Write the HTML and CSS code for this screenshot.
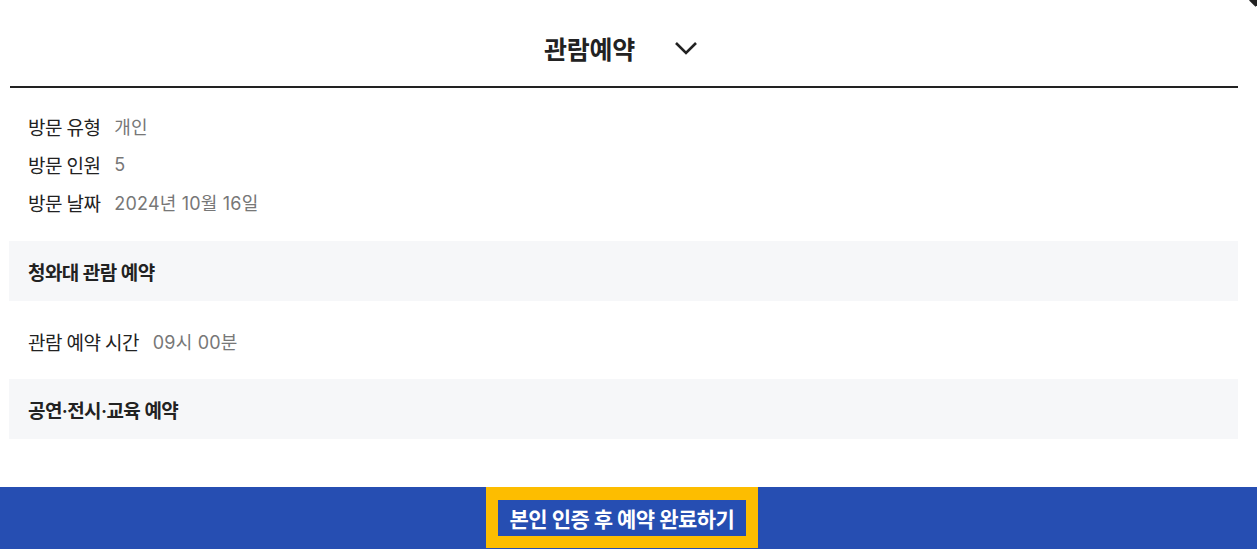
FILE: index.html
```html
<!DOCTYPE html>
<html lang="ko">
<head>
    <meta charset="UTF-8">
    <title>관람예약</title>
    <link rel="stylesheet" href="styles.css">
</head>
<body>
    <span class="corner"></span>
    <div class="panel">
        <div class="panel-head">
            <h1>관람예약</h1>
            <svg class="chevron" width="24" height="14" viewBox="0 0 24 14">
                <path d="M2 2 L12 12 L22 2" fill="none" stroke="#222" stroke-width="2.6"/>
            </svg>
        </div>

        <div class="info">
            <div class="row"><span class="label">방문 유형</span><span class="value">개인</span></div>
            <div class="row"><span class="label">방문 인원</span><span class="value">5</span></div>
            <div class="row"><span class="label">방문 날짜</span><span class="value">2024년 10월 16일</span></div>
        </div>

        <div class="section-title">청와대 관람 예약</div>

        <div class="info info-time">
            <div class="row"><span class="label">관람 예약 시간</span><span class="value">09시 00분</span></div>
        </div>

        <div class="section-title">공연·전시·교육 예약</div>
    </div>

    <div class="footer">
        <button type="button" class="submit"><span>본인 인증 후 예약 완료하기</span></button>
    </div>
</body>
</html>
```

FILE: styles.css
```css
body {
    margin: 0;
    font-family: Inter, "Noto Sans CJK KR", sans-serif;
    color: #222;
    background: #fff;
    position: relative;
}

.corner {
    position: absolute;
    top: -4px;
    right: -3px;
    width: 9px;
    height: 9px;
    background: #222;
    transform: rotate(45deg);
}

.panel {
    margin: 0 19px 0 9px;
}

.panel-head {
    height: 86px;
    border-bottom: 2px solid #222;
    margin-left: 1px;
    display: flex;
    align-items: center;
    justify-content: center;
    gap: 39px;
    padding-right: 6px;
}

.panel-head h1 {
    margin: 0;
    font-size: 25px;
    font-weight: 700;
    letter-spacing: -0.2px;
    padding-top: 10px;
}

.chevron {
    margin-top: 10px;
}

.info {
    padding: 19px 19px 20px;
}

.info-time {
    padding: 21px 19px 19px;
}

.row {
    display: flex;
    gap: 14px;
    height: 38px;
    align-items: center;
    font-size: 19px;
    letter-spacing: -0.6px;
}

.label {
    color: #222;
}

.value {
    color: #777;
    font-size: 18px;
    letter-spacing: 0.2px;
}

.section-title {
    background: #f6f7f9;
    height: 60px;
    display: flex;
    align-items: center;
    padding: 0 19px;
    font-size: 19px;
    font-weight: 600;
    letter-spacing: -0.6px;
}

.footer {
    margin-top: 48px;
    height: 62px;
    background: #264eb2;
    display: flex;
    justify-content: center;
    padding-right: 13px;
}

.submit {
    width: 272px;
    height: 61px;
    background: #264eb2;
    border: 12px solid #fdbd00;
    border-top-width: 13px;
    padding: 0;
    color: #fff;
    font-family: inherit;
    font-size: 21px;
    font-weight: 700;
    letter-spacing: -0.5px;
    cursor: pointer;
}
```
